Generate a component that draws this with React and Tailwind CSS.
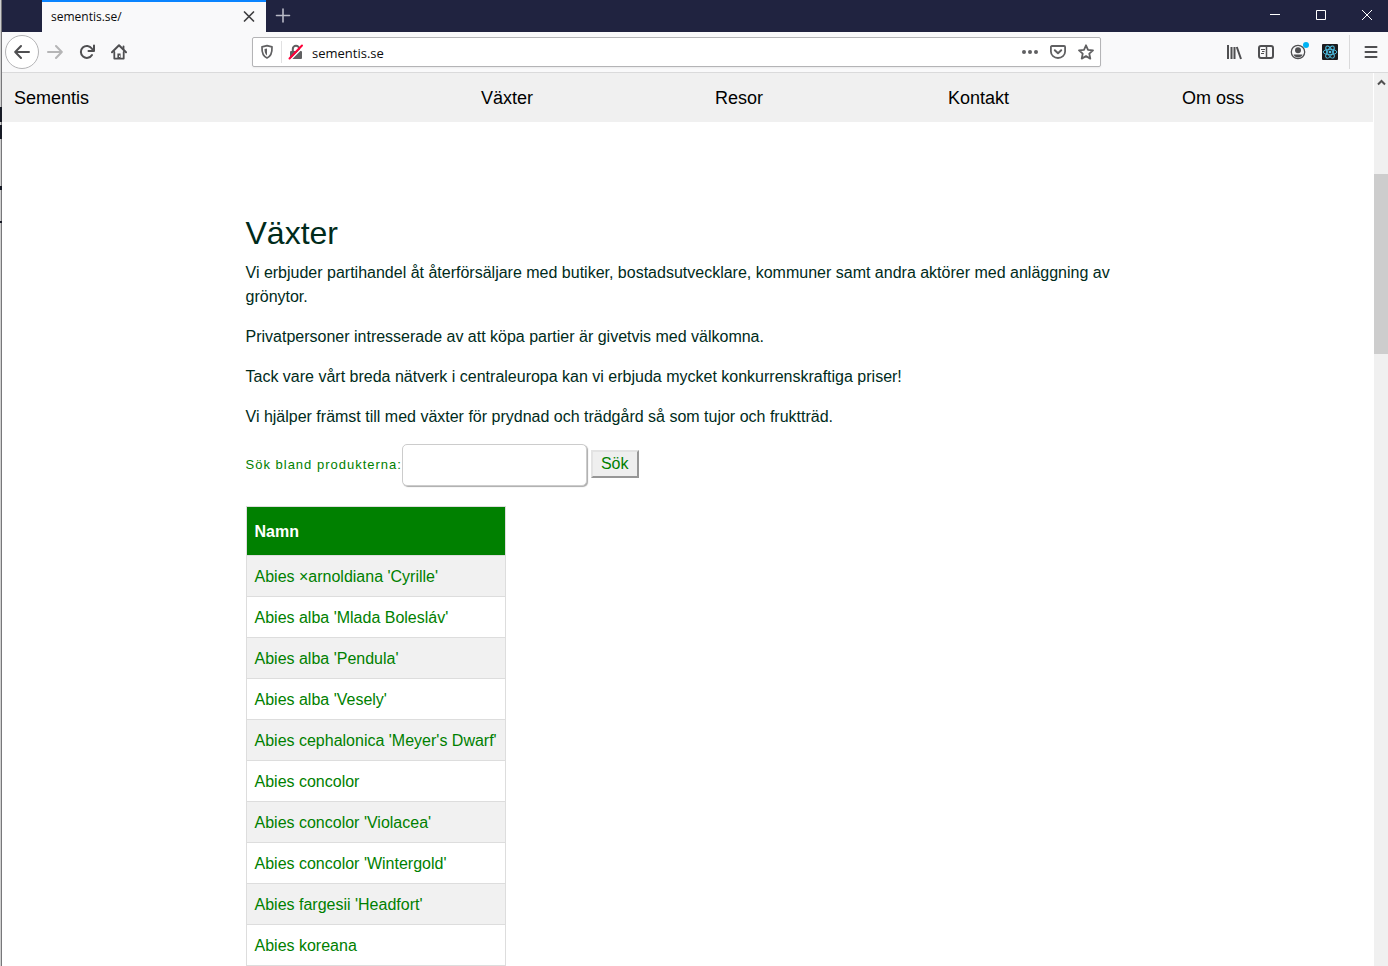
import { useState } from 'react'

const links = ['Växter', 'Resor', 'Kontakt', 'Om oss']

const intro = [
  'Vi erbjuder partihandel åt återförsäljare med butiker, bostadsutvecklare, kommuner samt andra aktörer med anläggning av grönytor.',
  'Privatpersoner intresserade av att köpa partier är givetvis med välkomna.',
  'Tack vare vårt breda nätverk i centraleuropa kan vi erbjuda mycket konkurrenskraftiga priser!',
  'Vi hjälper främst till med växter för prydnad och trädgård så som tujor och fruktträd.',
]

const plants = [
  "Abies ×arnoldiana 'Cyrille'",
  "Abies alba 'Mlada Bolesláv'",
  "Abies alba 'Pendula'",
  "Abies alba 'Vesely'",
  "Abies cephalonica 'Meyer's Dwarf'",
  'Abies concolor',
  "Abies concolor 'Violacea'",
  "Abies concolor 'Wintergold'",
  "Abies fargesii 'Headfort'",
  'Abies koreana',
]

// 16px stroke icon, the default look of the toolbar glyphs
function Icon({ children, className = 'text-[#4f4f51]' }) {
  return (
    <svg
      viewBox="0 0 16 16"
      className={`size-4 shrink-0 ${className}`}
      fill="none"
      stroke="currentColor"
      strokeWidth="2"
      strokeLinecap="round"
      strokeLinejoin="round"
      aria-hidden="true"
    >
      {children}
    </svg>
  )
}

function IconButton({ label, className = 'h-8 w-8', children }) {
  return (
    <button type="button" aria-label={label} className={`flex items-center justify-center ${className}`}>
      {children}
    </button>
  )
}

function TitleBar() {
  return (
    <div className="flex h-8 shrink-0 bg-[#202340]">
      <div className="ml-10 flex w-56 items-center justify-between border-t-2 border-[#0a84ff] bg-[#f9f9fa] pr-[9px] pl-[9px]">
        <span className="text-[12px] leading-4 text-[#0c0c0d]">sementis.se/</span>
        <button type="button" aria-label="Close tab" className="flex size-4 items-center justify-center">
          <Icon className="text-[#3f3f41]">
            <path d="M3.500 3l9 9M12.500 3l-9 9" strokeWidth="1.700" />
          </Icon>
        </button>
      </div>
      <IconButton label="New tab" className="h-[30px] w-[34px]">
        <Icon className="text-[#b9bac6]">
          <path d="M8 2v13M1.500 8.500h13" strokeWidth="1.600" />
        </Icon>
      </IconButton>
      <div className="-mr-0.5 ml-auto flex">
        <IconButton label="Minimize" className="h-[30px] w-[46px]">
          <svg viewBox="0 0 11 11" className="size-[11px]" stroke="#fff" fill="none">
            <path d="M0 4.500h10" />
          </svg>
        </IconButton>
        <IconButton label="Maximize" className="h-[30px] w-[46px]">
          <svg viewBox="0 0 11 11" className="size-[11px]" stroke="#fff" fill="none">
            <path d="M.5 .5h9v9h-9z" />
          </svg>
        </IconButton>
        <IconButton label="Close" className="h-[30px] w-[46px]">
          <svg viewBox="0 0 11 11" className="size-[11px]" stroke="#fff" fill="none">
            <path d="M0 0l10 10M10 0L0 10" />
          </svg>
        </IconButton>
      </div>
    </div>
  )
}

function AddressBar() {
  return (
    <div className="flex h-[30px] w-[849px] min-w-0 items-center rounded-[2px] border border-[#b4b4b6] bg-white px-1.5 shadow-[0_1px_2px_rgba(0,0,0,0.06)]">
      <Icon className="text-[#606062]">
        <path d="M8 1.700L13 2.800c.2 4.400-.2 9.200-5 11.200C3.200 12 2.800 7.200 3 2.800z" strokeWidth="1.700" />
        <path d="M8 4.500v7c-2-1.500-2.500-3.500-2.500-6.500z" fill="currentColor" stroke="none" />
      </Icon>
      <span className="mx-1.5 h-[22px] w-px bg-[#e1e1e2]" />
      <Icon className="text-[#606062]">
        <rect x="2" y="7" width="12" height="8" rx="1" fill="currentColor" stroke="none" />
        <path d="M4.800 7V5a3.200 3.200 0 0 1 6.400 0v2" />
        <path d="M2.500 15.800L15.800 2.500" stroke="#fff" strokeWidth="1.500" strokeLinecap="butt" />
        <path d="M1.500 14.500L14 1.500" stroke="#ff0039" />
      </Icon>
      <input
        type="text"
        aria-label="Address"
        defaultValue="sementis.se"
        className="ml-2 min-w-0 flex-1 pt-0.5 text-[13px] leading-4 text-[#0c0c0d] outline-none"
      />
      <div className="flex gap-3">
        <button type="button" aria-label="Page actions">
          <Icon className="text-[#606062]">
            <g fill="currentColor" stroke="none">
              <circle cx="2" cy="8" r="2" />
              <circle cx="8" cy="8" r="2" />
              <circle cx="14" cy="8" r="2" />
            </g>
          </Icon>
        </button>
        <button type="button" aria-label="Save to Pocket">
          <Icon className="text-[#606062]">
            <path d="M1.900 2h12.200a1 1 0 0 1 1 1v4.500a7.100 6.500 0 0 1-14.200 0V3a1 1 0 0 1 1-1z" strokeWidth="1.800" />
            <path d="M4.800 6.300L8 9.300l3.200-3" />
          </Icon>
        </button>
        <button type="button" aria-label="Bookmark">
          <Icon className="text-[#606062]">
            <path
              d="M8 1.300l2 4.500 5 .5-3.700 3.400 1 4.900L8 12.100l-4.300 2.500 1-4.900L1 6.300l5-.5z"
              strokeWidth="1.800"
            />
          </Icon>
        </button>
      </div>
    </div>
  )
}

function Toolbar() {
  return (
    <div className="flex h-[41px] shrink-0 items-center justify-between border-b border-[#dadadb] bg-[#f9f9fa] pl-[3px]">
      <div className="flex shrink-0 items-center">
        <button
          type="button"
          aria-label="Back"
          className="flex size-[34px] items-center justify-center rounded-full border border-[#b4b4b6] bg-white"
        >
          <Icon>
            <path d="M15 8H1.500M7 2L1.200 8 7 14" />
          </Icon>
        </button>
        <IconButton label="Forward">
          <Icon className="text-[#b5b5b6]">
            <path d="M1 8h13.500M9 2l5.800 6L9 14" />
          </Icon>
        </IconButton>
        <IconButton label="Reload">
          <Icon>
            <path d="M13 11A6 6 0 1 1 12.800 4.500" />
            <path d="M15 1.500V7H9.500" />
            <path d="M15 3v4h-4z" fill="currentColor" stroke="none" />
          </Icon>
        </IconButton>
        <IconButton label="Home">
          <Icon>
            <path d="M1 8.300L8 1.300l7 7" />
            <path d="M3.300 8v6.600h9.400V8" strokeWidth="1.800" />
            <path d="M6.400 15V9.500h3.200V15z" fill="currentColor" stroke="none" />
            <path d="M8.500 11.500v1.500" stroke="#f9f9fa" strokeWidth="1" strokeLinecap="butt" />
            <path d="M12.500 2.500V5" strokeWidth="1.800" />
          </Icon>
        </IconButton>
      </div>

      <AddressBar />

      <div className="flex shrink-0 items-center">
        <IconButton label="Library">
          <Icon>
            <path d="M2 1v14M5.500 3v12M8.500 3v12M10.800 3l4.200 12" strokeLinecap="butt" />
          </Icon>
        </IconButton>
        <IconButton label="Sidebars">
          <Icon>
            <rect x="1" y="2" width="14" height="12" rx="2" />
            <path d="M8.500 2v12" strokeWidth="1.500" />
            <path d="M3 5.500h4M4 7.500h2.500M3 9.500h3" strokeWidth="1" strokeLinecap="butt" />
          </Icon>
        </IconButton>
        <div className="relative">
          <IconButton label="Account">
            <Icon>
              <circle cx="8" cy="8" r="6.700" strokeWidth="1.300" />
              <circle cx="8" cy="6.300" r="3" fill="currentColor" stroke="none" />
              <path d="M3.500 10.500h9c-1 2.300-2.500 3-4.500 3s-3.500-.7-4.500-3z" fill="currentColor" stroke="none" />
            </Icon>
          </IconButton>
          <span className="absolute top-1.5 right-[5px] size-1.5 rounded-full bg-[#00b3f4]" />
        </div>
        <IconButton label="React Developer Tools">
          <span className="flex size-4 items-center justify-center rounded-[1px] bg-[#1c1c1e]">
            <svg viewBox="0 0 16 16" className="size-4" fill="none" stroke="#4fc3e8" strokeWidth="0.9">
              <ellipse cx="8" cy="8" rx="6.800" ry="2.700" />
              <ellipse cx="8" cy="8" rx="6.800" ry="2.700" transform="rotate(60 8 8)" />
              <ellipse cx="8" cy="8" rx="6.800" ry="2.700" transform="rotate(120 8 8)" />
              <circle cx="8" cy="8" r="1.300" fill="#4fc3e8" stroke="none" />
            </svg>
          </span>
        </IconButton>
        <span className="ml-[3px] h-[34px] w-px bg-[#dadadb]" />
        <IconButton label="Open menu" className="ml-1 h-8 w-[34px]">
          <Icon>
            <path d="M2.500 3h11M2.500 8h11M2.500 13h11" />
          </Icon>
        </IconButton>
      </div>
    </div>
  )
}

function SiteNav() {
  return (
    <nav className="grid grid-cols-[467fr_234fr_233fr_234fr_191fr] bg-[#f0f0f0] pt-[13px] pb-[11px] pl-3 text-[18px] leading-[25px] text-black">
      <a href="#sementis">Sementis</a>
      {links.map((link) => (
        <a key={link} href={`#${link}`}>
          {link}
        </a>
      ))}
    </nav>
  )
}

function PlantTable({ rows }) {
  return (
    <table className="mt-5 border-collapse text-[#008000]">
      <thead>
        <tr>
          <th className="border border-[#dddddd] bg-[#008000] px-2 pt-[13px] pb-[11px] text-left font-bold text-white">
            Namn
          </th>
        </tr>
      </thead>
      <tbody>
        {rows.map((name) => (
          <tr key={name} className="odd:bg-[#f1f1f1]">
            <td className="border border-[#dddddd] px-2 pt-[9px] pb-[7px]">{name}</td>
          </tr>
        ))}
      </tbody>
    </table>
  )
}

function Scrollbar() {
  return (
    <div className="ml-px flex w-[14px] shrink-0 flex-col bg-[#f0f0f0]" aria-hidden="true">
      <svg viewBox="0 0 14 18" className="h-[18px] w-[14px]" fill="none" stroke="#505050" strokeWidth="2">
        <path d="M4 11.500L7.500 8l3.500 3.500" />
      </svg>
      <div className="mt-[83px] h-[180px] bg-[#cdcdcd]" />
    </div>
  )
}

export default function App() {
  const [query, setQuery] = useState('')
  const [filter, setFilter] = useState('')

  const handleSubmit = (e) => {
    e.preventDefault()
    setFilter(query)
  }

  const rows = plants.filter((name) => name.toLowerCase().includes(filter.toLowerCase()))

  return (
    <div className="flex h-screen overflow-hidden bg-white">
      {/* Edge of the window behind */}
      <div className="w-0.5 shrink-0 border-r border-[#77777a] bg-[#cfcfcf]">
        <div className="mt-[107px] h-[15px] w-0.5 bg-[#171b26]" />
        <div className="mt-[3px] h-[14px] w-0.5 bg-[#171b26]" />
        <div className="mt-[47px] h-1 w-0.5 bg-[#171b26]" />
        <div className="mt-[31px] h-0.5 w-0.5 bg-[#171b26]" />
      </div>

      <div className="flex min-w-0 flex-1 flex-col font-['Open_Sans','Noto_Sans',sans-serif]">
        <TitleBar />
        <Toolbar />
        <div className="flex min-h-0 flex-1 font-['Liberation_Sans',Arial,sans-serif]">
          <div className="min-w-0 flex-1 overflow-hidden">
            <SiteNav />
            <main className="mx-auto mt-[92px] max-w-[884px] text-[16px] leading-6 text-[#002b1b]">
              <h1 className="mb-[9px] text-[32px] leading-[38px]">Växter</h1>
              {intro.map((text) => (
                <p key={text} className="mb-4 last-of-type:mb-[15px]">
                  {text}
                </p>
              ))}

              <form onSubmit={handleSubmit} className="flex items-center text-[#008000]">
                <label htmlFor="search" className="text-[13px] tracking-[1px]">
                  Sök bland produkterna:
                </label>
                <input
                  id="search"
                  type="text"
                  value={query}
                  onChange={(e) => setQuery(e.target.value)}
                  className="h-[42px] w-[185px] rounded-[5px] border border-[#cccccc] bg-white px-2 shadow-[1px_1px_1px_#aaaaaa] outline-none"
                />
                <button
                  type="submit"
                  className="mb-0.5 ml-1 h-7 border-2 border-t-[#e3e3e3] border-r-[#979797] border-b-[#979797] border-l-[#e3e3e3] bg-[#efefef] px-2 leading-6"
                >
                  Sök
                </button>
              </form>

              <PlantTable rows={rows} />
            </main>
          </div>
          <Scrollbar />
        </div>
      </div>
    </div>
  )
}
